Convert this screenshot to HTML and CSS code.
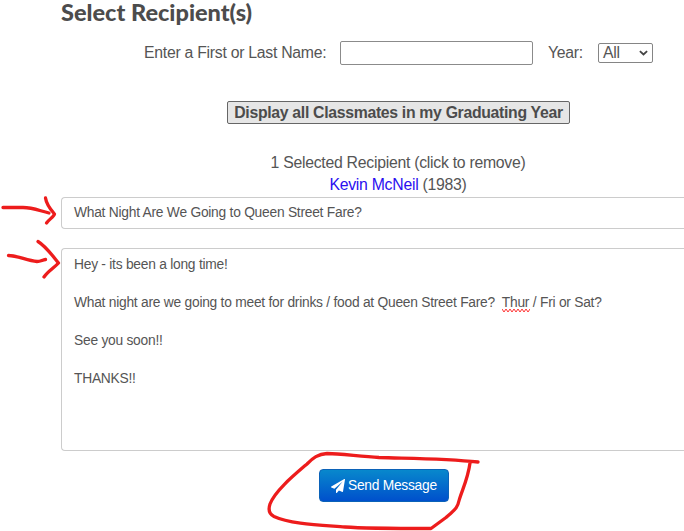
FILE: index.html
```html
<!DOCTYPE html>
<html lang="en">
<head>
<meta charset="utf-8">
<title>Select Recipients</title>
<link rel="stylesheet" href="styles.css">
</head>
<body>
<main class="page">
  <h1 class="title">Select Recipient(s)</h1>
  <form class="form">
    <div class="search">
      <label class="name-label" for="name">Enter a First or Last Name:</label>
      <input class="name" id="name" type="text">
      <label class="year-label" for="year">Year:</label>
      <div class="year" id="year"><span>All</span>
        <svg class="chevron" viewBox="0 0 10 6"><path d="M1 1l4 3.7L9 1"/></svg>
      </div>
    </div>
    <button class="display" type="button"><span>Display all Classmates in my Graduating Year</span></button>
    <div class="selected">
      <p><span class="count">1 Selected Recipient (click to remove)</span></p>
      <p><span class="person"><a class="link">Kevin McNeil</a> (1983)</span></p>
    </div>
    <div class="subject">What Night Are We Going to Queen Street Fare?</div>
    <div class="message">
      <p>Hey - its been a long time!</p>
      <p>What night are we going to meet for drinks / food at Queen Street Fare?&nbsp; <span class="misspelled">Thur<svg class="squiggle" viewBox="0 0 28 5"><path d="M0 1l2 3 2-3 2 3 2-3 2 3 2-3 2 3 2-3 2 3 2-3 2 3 2-3 2 3 2-3"/></svg></span> / Fri or Sat?</p>
      <p>See you soon!!</p>
      <p>THANKS!!</p>
    </div>
    <button class="send" type="button">
      <svg class="plane" viewBox="0 0 14 14"><path d="M13.8.1c.2.1.2.3.2.5l-2 12c0 .3-.3.5-.6.4L7.900 11.500 6 13.800c-.3.400-1 .2-1-.3V10.800L11.700 2.500 3.400 9.700.3 8.400c-.4-.2-.4-.7 0-.9l13-7.400c.2-.1.4-.1.500 0z"/></svg>
      <span>Send Message</span>
    </button>
  </form>
</main>
<svg class="marks" viewBox="0 0 684 531">
  <path d="M3 207.500H23C33 207.500 40 211 49 213"/>
  <path d="M45.500 198C46.500 205 51 210 54.500 214C53.500 217 49 219.500 46.500 223"/>
  <path d="M8.500 255.500C17 255.500 27 260.500 37 261.500C41 261.500 42 260 45.500 259.500"/>
  <path d="M38 241.500C46 246.500 52 255 58.500 263C54 268 48 271 44 277"/>
  <path d="M478 462C446 458.500 412 458.500 379 457.500C360 456.500 340 453.500 327 453.500C318 454 313 458 307 464C293 476 275 491 270 504C268 510 269 514 274 516.500C290 524 320 525 345 527C365 528.500 393 528.500 431 528.500L446 517.500C454 510 457 510 459.500 499C463 488 468 478 470 463"/>
</svg>
</body>
</html>
```
FILE: styles.css
```css
* {
  box-sizing: border-box;
}

body {
  margin: 0;
  width: 684px;
  height: 531px;
  overflow: hidden;
  position: relative;
  background: #fff;
  color: #555;
  font-family: "Liberation Sans", Arial, sans-serif;
  font-size: 15.8px;
  letter-spacing: -0.27px;
}

p {
  margin: 0;
}

.page {
  width: 684px;
  padding-left: 61px;
}

.title {
  margin: 0;
  height: 40px;
  line-height: 25px;
  font-family: Lato, sans-serif;
  font-size: 23.5px;
  font-weight: 900;
  letter-spacing: 0;
  color: #4c4c4c;
  white-space: nowrap;
}

.form {
  display: flex;
  flex-direction: column;
  align-items: flex-start;
}

.search {
  display: flex;
  align-items: center;
  height: 26px;
  margin-left: 83px;
  white-space: nowrap;
}

.name-label {
  width: 196px;
}

.name {
  width: 193px;
  height: 24px;
  padding: 0 4px;
  border: 1px solid #8b8b8b;
  border-radius: 2px;
  background: #fff;
}

.year-label {
  width: 50px;
  margin-left: 15px;
}

.year {
  display: flex;
  align-items: center;
  justify-content: space-between;
  width: 55px;
  height: 20px;
  padding: 0 4px;
  border: 1px solid #858585;
  border-radius: 2px;
}

.chevron {
  width: 9px;
  height: 6px;
  fill: none;
  stroke: #444;
  stroke-width: 2;
}

.display {
  width: 343px;
  height: 23px;
  margin: 35px 0 0 166px;
  padding: 0;
  border: 1px solid #666;
  border-radius: 2px;
  background: #e6e6e6;
  color: #4c4c4c;
  font: bold 15.8px/20px "Liberation Sans", Arial, sans-serif;
  letter-spacing: -0.31px;
  white-space: nowrap;
}

.selected {
  width: 352px;
  height: 45px;
  margin: 28px 0 0 161px;
  line-height: 22px;
  text-align: center;
}

.link {
  color: #2a0ff0;
}

.subject,
.message {
  width: 623px;
  border: 1px solid #ccc;
  border-right: 0;
  border-radius: 4px 0 0 4px;
  padding-left: 12px;
  font-size: 13.8px;
  letter-spacing: -0.25px;
  white-space: nowrap;
}

.subject {
  height: 32px;
  line-height: 30px;
}

.message {
  height: 203px;
  margin-top: 19px;
  padding-top: 6px;
  line-height: 19px;
}

.message p + p {
  margin-top: 19px;
}

.misspelled {
  position: relative;
}

.squiggle {
  position: absolute;
  left: 0;
  bottom: -3px;
  width: 28px;
  height: 5px;
  fill: none;
  stroke: #f33;
}

.send {
  display: flex;
  align-items: center;
  width: 130px;
  height: 33px;
  margin: 18px 0 0 258px;
  padding: 0 0 0 11px;
  gap: 3px;
  border: 1px solid #0b62b8;
  border-radius: 4px;
  background: linear-gradient(#0888cc, #0050cc);
  color: #fff;
  font: 13.8px "Liberation Sans", Arial, sans-serif;
  letter-spacing: -0.27px;
  white-space: nowrap;
}

.plane {
  width: 14px;
  height: 14px;
  fill: #fff;
}

.marks {
  position: absolute;
  inset: 0;
  width: 684px;
  height: 531px;
  fill: none;
  stroke: #ed1c1c;
  stroke-width: 3.3;
  stroke-linecap: round;
  stroke-linejoin: round;
  pointer-events: none;
}
```
